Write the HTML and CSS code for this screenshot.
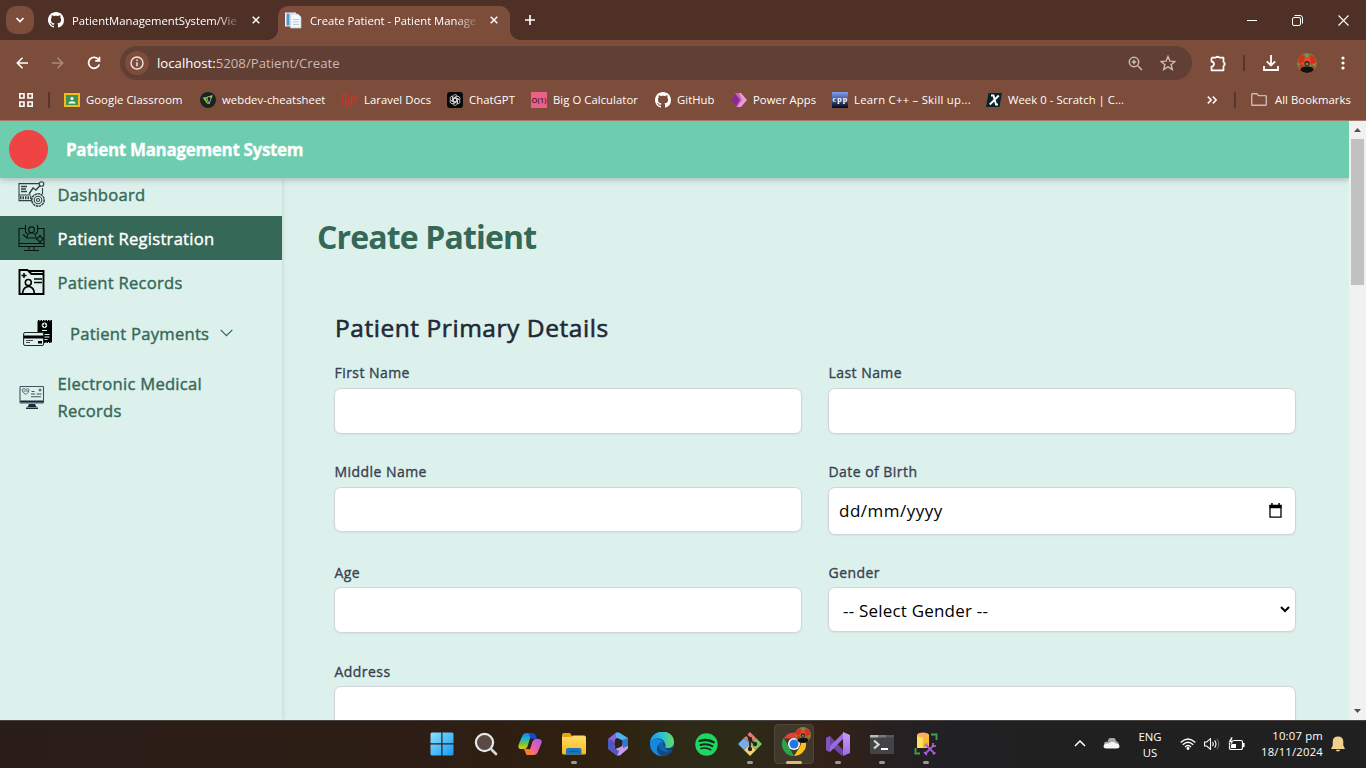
FILE: index.html
```html
<!DOCTYPE html>
<html lang="en">
<head>
<meta charset="utf-8">
<title>Create Patient - Patient Management System</title>
<link rel="stylesheet" href="styles.css">
</head>
<body>
<svg width="0" height="0" class="defs">
  <defs>
    <linearGradient id="win" x1="0" y1="0" x2="1" y2="1"><stop offset="0" stop-color="#8ce3fc"/><stop offset="1" stop-color="#139af5"/></linearGradient>
    <linearGradient id="copA" x1="0" y1="0" x2="0" y2="1"><stop offset="0" stop-color="#1b7fe8"/><stop offset=".35" stop-color="#19b3d8"/><stop offset=".65" stop-color="#6fc23f"/><stop offset="1" stop-color="#f4c417"/></linearGradient>
    <linearGradient id="copB" x1="1" y1="0" x2="0" y2="1"><stop offset="0" stop-color="#9a5cf5"/><stop offset=".5" stop-color="#ef5da8"/><stop offset="1" stop-color="#ff8a3c"/></linearGradient>
    <linearGradient id="fold" x1="0" y1="0" x2="0" y2="1"><stop offset="0" stop-color="#ffdc6b"/><stop offset="1" stop-color="#fbb917"/></linearGradient>
    <linearGradient id="edge" x1="0" y1="0" x2="1" y2="0"><stop offset="0" stop-color="#1a9be0"/><stop offset=".5" stop-color="#2fc0d4"/><stop offset="1" stop-color="#66dd5a"/></linearGradient>
    <linearGradient id="vs" x1="0" y1="0" x2="0" y2="1"><stop offset="0" stop-color="#c79bf3"/><stop offset="1" stop-color="#a06be6"/></linearGradient>
    <linearGradient id="cpp" x1="0" y1="0" x2="0" y2="1"><stop offset="0" stop-color="#7ca0f5"/><stop offset=".5" stop-color="#3d5590"/><stop offset="1" stop-color="#05070d"/></linearGradient>
    <symbol id="github" viewBox="0 0 16 16"><path fill="#fff" d="M8 0C3.58 0 0 3.58 0 8c0 3.54 2.29 6.53 5.47 7.59.4.07.55-.17.55-.38 0-.19-.01-.82-.01-1.49-2.01.37-2.53-.49-2.69-.94-.09-.23-.48-.94-.82-1.13-.28-.15-.68-.52-.01-.53.63-.01 1.08.58 1.23.82.72 1.21 1.87.87 2.33.66.07-.52.28-.87.51-1.07-1.78-.2-3.64-.89-3.64-3.95 0-.87.31-1.59.82-2.15-.08-.2-.36-1.02.08-2.12 0 0 .67-.21 2.2.82.64-.18 1.32-.27 2-.27s1.36.09 2 .27c1.53-1.04 2.2-.82 2.2-.82.44 1.1.16 1.92.08 2.12.51.56.82 1.27.82 2.15 0 3.07-1.87 3.75-3.65 3.95.29.25.54.73.54 1.48 0 1.07-.01 1.93-.01 2.2 0 .21.15.46.55.38A8.01 8.01 0 0 0 16 8c0-4.42-3.58-8-8-8z"/></symbol>
    <clipPath id="round"><circle cx="10" cy="10" r="10"/></clipPath>
    <symbol id="avatar" viewBox="0 0 20 20"><g clip-path="url(#round)"><path fill="#7f7a3e" d="M0 0h20v20H0z"/><path fill="#d9301c" d="M1 6l4-5 3 3-1 5-5 2zM13 2l5 2 1 6-4 2-3-4zM2 12l4-1 1 4-4 1zM14 13h4l-1 4z"/><path fill="#6f9a48" d="M8 0l3 1 1 3-3 1zM15 11l4-1-1 4zM0 10l3 1-2 2z"/><path fill="#e8472e" d="M8 4l4 0 2 4-3 2-4-1z"/><circle cx="10" cy="10.500" r="2.600" fill="#3d241c"/><circle cx="10" cy="11" r="1.300" fill="#b07a5c"/><path fill="#120f10" d="M3 20c0-6 3-6.500 7-6.500s7 .5 7 6.500z"/></g></symbol>
  </defs>
</svg>

<header class="browser">
  <div class="tabs">
    <div class="tab-search"><svg width="10" height="6" viewBox="0 0 10 6"><path d="M1.500 1l3.500 3.500L8.500 1" fill="none" stroke="#fff" stroke-width="1.700"/></svg></div>
    <div class="tab">
      <svg width="16" height="16"><use href="#github"/></svg>
      <span class="tab-title dim-end">PatientManagementSystem/Vie</span>
      <svg width="8" height="8" viewBox="0 0 8 8"><path d="M.7.7l6.600 6.600M7.300.7L.7 7.300" stroke="#fff" stroke-width="1.500"/></svg>
    </div>
    <div class="tab active">
      <svg width="17" height="17" viewBox="0 0 17 17"><path fill="#eef5fa" d="M0 .5h11v14H0z"/><path fill="#469bd0" d="M1.500 1.500h3v12h-3z"/><path fill="#f4f7f9" stroke="#b9c8d4" stroke-width=".7" d="M5.500 2h7.500l3 3v11H5.500z"/><path stroke="#bccbd6" d="M8 7.500h6M8 10h6M8 12.500h6"/></svg>
      <span class="tab-title dim-end">Create Patient - Patient Manage</span>
      <svg width="8" height="8" viewBox="0 0 8 8"><path d="M.7.7l6.600 6.600M7.300.7L.7 7.300" stroke="#fff" stroke-width="1.500"/></svg>
    </div>
    <svg class="new-tab" width="10" height="10" viewBox="0 0 10 10"><path d="M5 0v10M0 5h10" stroke="#fff" stroke-width="1.600"/></svg>
    <div class="window-buttons">
      <svg width="10" height="10" viewBox="0 0 10 10"><path d="M0 5.500h10" stroke="#fff"/></svg>
      <svg width="11" height="11" viewBox="0 0 11 11"><g fill="none" stroke="#fff"><rect x=".5" y="2.500" width="8" height="8" rx="1.500"/><path d="M2.500.5H8A2.500 2.500 0 0 1 10.500 3v5.500"/></g></svg>
      <svg width="11" height="11" viewBox="0 0 11 11"><path d="M.5.5l10 10M10.500.5l-10 10" stroke="#fff" stroke-width="1.100"/></svg>
    </div>
  </div>

  <div class="toolbar">
    <svg width="12" height="12" viewBox="0 0 12 12"><path d="M12 6H1.500M6.500.8L1.300 6l5.200 5.200" fill="none" stroke="#fff" stroke-width="1.600"/></svg>
    <svg width="12" height="12" viewBox="0 0 12 12"><path d="M0 6h10.500M5.500.8L10.700 6l-5.200 5.200" fill="none" stroke="#ab8a7f" stroke-width="1.500"/></svg>
    <svg width="14" height="14" viewBox="0 0 14 14"><path d="M12.300 8.500A5.500 5.500 0 1 1 11.500 3.500L12 4.200" fill="none" stroke="#fff" stroke-width="1.700"/><path d="M13.300.7v5H8.300l0-1.600h3.400V.7z" fill="#fff"/></svg>
    <div class="omnibox">
      <div class="site-info"><svg width="14" height="14" viewBox="0 0 14 14"><circle cx="7" cy="7" r="6" fill="none" stroke="#efe7e4" stroke-width="1.400"/><path d="M7 6.200v4M7 3.500v1.500" stroke="#efe7e4" stroke-width="1.500"/></svg></div>
      <span class="url"><b>localhost:</b>5208/Patient/Create</span>
      <svg width="15" height="15" viewBox="0 0 15 15"><g fill="none" stroke="#c9bbb5" stroke-width="1.500"><circle cx="6" cy="6" r="4.700"/><path d="M9.500 9.500l4.500 4.500"/></g><path d="M6 3.800v4.400M3.800 6h4.400" stroke="#c9bbb5" stroke-width="1.500"/></svg>
      <svg width="16" height="16" viewBox="0 0 16 16"><path d="M8 1.500l1.900 4.600 5 .4-3.800 3.200 1.200 4.800L8 11.900l-4.300 2.600 1.200-4.800L1.100 6.500l5-.4z" fill="none" stroke="#c9bbb5" stroke-width="1.400"/></svg>
    </div>
    <svg width="17" height="17" viewBox="0 0 17 17"><path d="M1.500 2.700h4.500M9 2.700h4.500v4.800M13.500 10.500v4.800h-12v-3.700a2.500 2.500 0 0 0 0-5V2.700" fill="none" stroke="#fff" stroke-width="1.700" stroke-linejoin="round"/><path d="M5.300 3a2.200 2.200 0 0 1 4.400 0zM13.500 6.800a2.200 2.200 0 0 1 0 4.400z" fill="#fff"/></svg>
    <i class="sep"></i>
    <svg width="16" height="16" viewBox="0 0 16 16"><path d="M8 0v10M3.800 6.300L8 10.500l4.200-4.200M1 11v4h14v-4" fill="none" stroke="#fff" stroke-width="1.800"/></svg>
    <svg width="20" height="20"><use href="#avatar"/></svg>
    <svg width="4" height="14" viewBox="0 0 4 14" fill="#fff"><circle cx="2" cy="2" r="1.600"/><circle cx="2" cy="7" r="1.600"/><circle cx="2" cy="12" r="1.600"/></svg>
  </div>

  <nav class="bookmarks">
    <svg width="16" height="16" viewBox="0 0 16 16"><g fill="none" stroke="#fff" stroke-width="1.600"><path d="M1.800 1.800h4.200v4.200H1.800zM10 1.800h4.200v4.200H10zM1.800 10h4.200v4.200H1.800zM10 10h4.200v4.200H10z"/></g></svg>
    <i class="sep"></i>
    <span><svg width="16" height="16" viewBox="0 0 16 16"><path fill="#f5bb16" d="M0 1h16v14H0z"/><path fill="#3b9457" d="M2 3h12v10H2z"/><circle cx="8" cy="6.500" r="1.600" fill="#fff"/><path fill="#fff" d="M4.500 11.500c0-3 7-3 7 0z"/></svg>Google Classroom</span>
    <span><svg width="16" height="16" viewBox="0 0 16 16"><circle cx="8" cy="8" r="8" fill="#1b2321"/><path d="M7 5l5-1-3 8-1.500-4z" fill="none" stroke="#9aa89a" stroke-width="1"/><path fill="#8cc63f" d="M2.500 5.500l5-.5L6 7l2.500 5.500-2-1.500zM8.500 4.500l4-1.500-1 3.500z"/></svg>webdev-cheatsheet</span>
    <span><svg width="16" height="16" viewBox="0 0 16 16"><path d="M.6 2.500l3-1.700 3 1.700v7l3 1.700 5.600-3.200V4.800L12.500 3.300 9.700 4.800v6.400M.6 2.500v9.800l5.800 3.200 3.200-1.800v-2.500M.6 2.500l3 1.700 3-1.700M3.600 4.200v6.900l2.800 1.800 3.200-1.700M3.600 11.100l3-1.600M9.700 4.800l2.800 1.700 2.700-1.700M12.500 6.500v3" fill="none" stroke="#cf3528" stroke-width=".9"/></svg>Laravel Docs</span>
    <span><svg width="16" height="16" viewBox="0 0 16 16"><rect width="16" height="16" rx="3" fill="#08090a"/><g fill="none" stroke="#d8d8d8" stroke-width=".8"><path id="petal" d="M5.800 9.300V5a2.300 2.300 0 0 1 4.300-1.200L6.500 6v3.500"/><use href="#petal" transform="rotate(60 8 8)"/><use href="#petal" transform="rotate(120 8 8)"/><use href="#petal" transform="rotate(180 8 8)"/><use href="#petal" transform="rotate(240 8 8)"/><use href="#petal" transform="rotate(300 8 8)"/></g></svg>ChatGPT</span>
    <span><svg width="16" height="16" viewBox="0 0 16 16"><path fill="#ec5f87" d="M0 0h16v16H0z"/><text x="8" y="11" text-anchor="middle" class="big-o" textLength="15">O(1)</text></svg>Big O Calculator</span>
    <span><svg width="16" height="16"><use href="#github"/></svg>GitHub</span>
    <span><svg width="16" height="16" viewBox="0 0 16 16"><path fill="#8d2a92" d="M0 8l6-7 5 7-5 7z"/><path fill="#c662bd" d="M4 1h4l4 7-5 7H5l4-7z"/><path fill="#ec9bd9" d="M8 1h2l6 7-6 7H6l5-7z"/></svg>Power Apps</span>
    <span class="learn"><svg width="16" height="16" viewBox="0 0 16 16"><path fill="url(#cpp)" d="M0 0h16v16H0z"/><text x="8" y="10" text-anchor="middle" class="cpp" textLength="15">cpp</text></svg>Learn C++ – Skill up...</span>
    <span><svg width="16" height="16" viewBox="0 0 16 16"><path fill="#04252b" d="M2.500 1H16l-2.500 14H0z"/><path d="M5 3.500h2.500l2.500 9h2M12.800 3.500L3.800 12.500" fill="none" stroke="#fff" stroke-width="1.900"/></svg>Week 0 - Scratch | C...</span>
    <svg width="10" height="8" viewBox="0 0 10 8"><path d="M.8.6L4.200 4 .8 7.400M5.800.6L9.200 4 5.800 7.400" fill="none" stroke="#fff" stroke-width="1.500"/></svg>
    <i class="sep"></i>
    <span class="all"><svg width="16" height="13" viewBox="0 0 16 13"><path d="M1.500.8h4.300l1.700 1.800h7q.8 0 .8.800v8q0 .8-.8.800h-13q-.8 0-.8-.8V1.600q0-.8.800-.8z" fill="none" stroke="#cbbab3" stroke-width="1.400"/></svg>All Bookmarks</span>
  </nav>
</header>

<div class="viewport">
  <div class="app">
    <div class="app-header"><div class="logo"></div><div class="brand">Patient Management System</div></div>
    <div class="body">
      <aside>
        <a class="item first"><svg width="27" height="26" viewBox="0 0 27 26"><g fill="none" stroke="#35413e" stroke-width="1.100"><path d="M21 2.600H1v17h13M1 14h12M24.500 7v6"/><path d="M11 13l4-6 3 2 4-4.500" stroke-width="1.400"/><circle cx="23.500" cy="3" r="2.300"/><path d="M3 5.500h6M3 8h5M3 10.500h6" stroke-width="1.400"/><path d="M2 16.800h12" stroke-width="3" stroke-dasharray="1.500 1"/><circle cx="20" cy="19" r="6.200" stroke-width="1.500" stroke-dasharray="2.500 .6"/><circle cx="20" cy="19" r="3.800"/><circle cx="20" cy="19" r="1.500"/></g></svg><span>Dashboard</span></a>
        <a class="item selected"><svg width="27" height="27" viewBox="0 0 27 27"><g fill="none" stroke="#061511" stroke-width="1.100"><path d="M7 3.500H1v18h25v-18h-6M1 18.500h25M11 21.500v3M16 21.500v3M6 25.500h15"/><circle cx="13.500" cy="4.800" r="2.900"/><path d="M9 13c0-7 9-7 9 0zM7.500 0v7l2 2M19.500 0v7l-2 2M5 9.500l4 3.500h9"/><path d="M22 10.500l1.500 2 2 1.500-2 1.500-1.500 2-1.500-2-2-1.500 2-1.500z"/></g></svg><span>Patient Registration</span></a>
        <a class="item"><svg width="26" height="26" viewBox="0 0 26 26"><g fill="none" stroke="#000" stroke-width="1.900"><path d="M1 1h8l4 4h12v20H1zM10 2h15v20"/><circle cx="9.800" cy="13.500" r="3" stroke-width="1.600"/><path d="M4 25c0-10 12-10 12 0M15.500 10h8M15.500 13.500h8" stroke-width="1.700"/><path d="M5.500 4v5M3 6.500h5" stroke-width="1.500"/></g></svg><span>Patient Records</span></a>
        <a class="item payments"><svg width="29" height="26" viewBox="0 0 29 26"><path fill="#000" d="M14.500 0H29v23h-9v-8h-5.500z"/><path d="M14 .6h15M20 22.500h9" stroke="#ddf1ec" stroke-dasharray="1 1.500"/><circle cx="21.500" cy="5.300" r="2.700" fill="#ddf1ec"/><path d="M21.500 3.500v3.600M19.700 5.300h3.600" stroke="#000"/><path d="M19 10.500h5M21.500 14.500h5M21.500 17h5M21.500 19.500h3" stroke="#ddf1ec"/><rect x=".6" y="12.500" width="20" height="13" rx="1.500" fill="#ddf1ec" stroke="#222"/><path fill="#000" d="M.6 15.500h20v3H.6zM15 21h4v2.500h-4z"/><path d="M3 20.500h7M3 22.500h4" stroke="#222" stroke-width=".8"/></svg><span>Patient Payments</span><svg class="chev" width="13" height="8" viewBox="0 0 13 8"><path d="M.7.9l5.800 5.800L12.300.9" fill="none" stroke="#356856" stroke-width="1.300"/></svg></a>
        <a class="item records"><svg width="26" height="24" viewBox="0 0 26 24"><g fill="none" stroke="#40535c" stroke-width="1.100"><rect x="1.500" y="1.500" width="23.500" height="16.500" rx=".8"/><path d="M12.500 11.800h10M12.500 9h4M18 9h5M13 6.500h3M21.500 3.500v3M20 5h3"/><path d="M3.500 4.500q2-2 4 0 2-2 3 0 0 3-3 5-4-2-4-5zM5 6h5" stroke-width=".8"/></g><path fill="#172a39" d="M2 15.500h22.500v2H2zM10.500 19h6l1.500 3h-9zM7.500 22.500h12V24h-12z"/></svg><span>Electronic Medical Records</span></a>
      </aside>
      <main>
        <h1>Create Patient</h1>
        <h2>Patient Primary Details</h2>
        <form>
          <div><label>First Name</label><div class="control"></div></div>
          <div><label>Last Name</label><div class="control"></div></div>
          <div><label>Middle Name</label><div class="control short"></div></div>
          <div><label>Date of Birth</label><div class="control date"><span>dd/mm/yyyy</span><svg width="13" height="15" viewBox="0 0 13 15"><path d="M1 2.500h11v11.700H1z" fill="none" stroke="#000" stroke-width="1.300"/><path d="M.5 2h12v3.200H.5zM2.200 0h1.500v2.500H2.200zM9.300 0h1.500v2.500H9.300z"/></svg></div></div>
          <div class="low"><label>Age</label><div class="control"></div></div>
          <div class="low"><label>Gender</label><div class="control short gender"><span>-- Select Gender --</span><svg width="10" height="7" viewBox="0 0 10 7"><path d="M1 1l4 4 4-4" fill="none" stroke="#000" stroke-width="2"/></svg></div></div>
          <div class="low wide"><label>Address</label><div class="control"></div></div>
        </form>
      </main>
    </div>
  </div>
  <div class="scrollbar">
    <svg width="7" height="4" viewBox="0 0 7 4"><path d="M3.500 0L7 4H0z" fill="#505050"/></svg>
    <div class="thumb"></div>
    <svg width="7" height="4" viewBox="0 0 7 4"><path d="M3.500 4L7 0H0z" fill="#505050"/></svg>
  </div>
</div>

<footer class="taskbar">
  <div class="apps">
    <div><svg width="24" height="24" viewBox="0 0 24 24"><path fill="url(#win)" d="M.5 2q0-1.500 1.500-1.500h9.300v10.800H.5zM12.500.5H22q1.500 0 1.500 1.500v9.300h-11zM.5 12.500h10.800v11H2q-1.500 0-1.500-1.500zM12.500 12.500h11V22q0 1.500-1.500 1.500h-9.500z"/></svg></div>
    <div><svg width="24" height="24" viewBox="0 0 24 24"><circle cx="10.500" cy="10.500" r="8.600" fill="#5b4a43" stroke="#e9e9e9" stroke-width="2.200"/><path d="M17 17l5 5" stroke="#d5d7da" stroke-width="2.700" stroke-linecap="round"/></svg></div>
    <div><svg width="24" height="24" viewBox="0 0 24 24"><path fill="url(#copA)" d="M4 4.500Q5.200 1 8.500 1H16l-3 4q-1 1-1.500 3l-2 6.500Q8.700 17 6 17H3.500Q-.5 17 .5 13z"/><path fill="#1748c8" d="M10.500 1h4.500q2 0 2.800 2.500l1.200 3.500h-4.500q-2 0-2.500-2z"/><path fill="url(#copB)" d="M20 19.500Q18.800 23 15.500 23H8l3-4q1-1 1.500-3l2-6.500Q15.300 7 18 7h2.500q4 0 3 4z"/><path fill="#f97937" d="M14 22.500q-1 .7-3 .5-3 0-4-3.500l-1-2.500h4.500q2 0 2.500 2z"/></svg></div>
    <div class="run"><svg width="24" height="22" viewBox="0 0 24 22"><path fill="#e5a40b" d="M0 2q0-2 2-2h6l2 3v4H0z"/><path fill="url(#fold)" d="M0 4h9l2-1.500h11q2 0 2 2V20q0 1.500-2 1.500H2Q0 21.500 0 20z"/><path fill="#1478c9" d="M4 21.500V17q0-2 2-2h11.500q2 0 2 2v4.500z"/><path d="M7 18.500h9.500" stroke="#0b59a2" stroke-width="1.300"/></svg></div>
    <div><svg width="22" height="24" viewBox="0 0 22 24"><path fill="#8e63d9" d="M1 7l8-6.500 4 3-5 4v9l-4 2.500-3-2z"/><path fill="#48b5f2" d="M9 .5h3L21 6v9l-5-2.500v-4L9 5.500z"/><path fill="#c49aef" d="M21 12v4.500l-8 7h-3l-6-4.500 11-5 1-3z"/><path fill="#4d59bd" d="M1 7v9.500L10 23.500l2-4.500-5-3V9z"/><path fill="#2f78cc" d="M15 8l6-2v8l-5 2z"/><circle cx="11" cy="12" r="3.600" fill="#2c241c"/></svg></div>
    <div><svg width="24" height="24" viewBox="0 0 24 24"><circle cx="12" cy="12" r="12" fill="#0b66bd"/><path fill="url(#edge)" d="M0 11C1-4 24-4 24 10c0 5-4 6-7 6-4 0-3-2-2-4 0-7-12-8-15-1z"/><path fill="#1689d9" d="M0 11c3-5 10-5 13-1-6-1-7 8-2 14C5 23 0 19 0 11z"/><path fill="#134a86" d="M9 13c0 5 5 9 13 5-3 5-8 7-12 5-4-3-4-8-1-10z"/><path fill="#2b2c1d" d="M13 10.500q4 2 2 4.500 3 3 8 0l1 2-2 1q-8 2-9-7.500z" opacity=".75"/></svg></div>
    <div><svg width="23" height="23" viewBox="0 0 23 23"><circle cx="11.500" cy="11.500" r="11.200" fill="#1ed760"/><g fill="none" stroke="#17291b" stroke-linecap="round"><path d="M4.500 8q7.500-2.500 14.200 1.200" stroke-width="2.300"/><path d="M5.500 12q6.500-1.800 11.800 1.200" stroke-width="1.900"/><path d="M6 15.500q5-1.300 9.800 1.200" stroke-width="1.600"/></g></svg></div>
    <div class="run"><svg width="24" height="24" viewBox="0 0 24 24"><path fill="#f17373" d="M12 0l6 6-6 6-6-6z"/><path fill="#74aee9" d="M6 6l6 6-6 6-6-6z"/><path fill="#83c163" d="M18 6l6 6-6 6-6-6z"/><path fill="#f7d276" d="M12 12l6 6-6 6-6-6z"/><path d="M8 2.500l4 4v10M12 7.500l4.500 4.500" fill="none" stroke="#28251c" stroke-width="1.800"/><g fill="#28251c"><circle cx="12" cy="7" r="2.200"/><circle cx="12" cy="17" r="2.200"/><circle cx="17" cy="12" r="2.200"/></g></svg></div>
    <div class="run current"><svg width="30" height="30" viewBox="0 0 30 30"><path fill="#e34133" d="M3.600 11.500a12 12 0 0 1 20.800 0z"/><path fill="#2ba24c" d="M3.600 10.800L9 20l5 9A12 12 0 0 1 3.600 10.800z"/><path fill="#fbc116" d="M14 29l6-9.500q2-4 0-8h4.800A12 12 0 0 1 14 29z"/><circle cx="14" cy="17" r="6" fill="#fff"/><circle cx="14" cy="17" r="4.500" fill="#2377e8"/></svg><svg class="badge" width="16" height="16"><use href="#avatar"/></svg></div>
    <div class="run"><svg width="24" height="24" viewBox="0 0 24 24"><path fill="#6f46a8" d="M0 6l4-2 14 15-2 5L4 13v0l-1.500 1L5 16l-2 3-3-1z"/><path fill="#9b6ade" d="M0 18l18-18v6L4 20z"/><path fill="#8055bd" d="M0 6l4-2v15l-4-1z"/><path fill="url(#vs)" d="M17 0l7 3v18l-7 3z"/></svg></div>
    <div class="run"><svg width="24" height="20" viewBox="0 0 24 20"><rect width="24" height="19" y="1" rx="1" fill="#424446"/><path fill="#b7b9ba" d="M0 1h8v2.500H0z"/><path fill="#777a7c" d="M8 1h8v2.500H8z"/><path fill="#56595b" d="M16 1h8v2.500h-8z"/><path d="M4 6.500l4.500 4L4 14.500" fill="none" stroke="#d4d5d6" stroke-width="2.300"/><path d="M11 15h7" stroke="#fff" stroke-width="2"/></svg></div>
    <div class="run"><svg width="24" height="24" viewBox="0 0 24 24"><path fill="#f5bd2c" d="M3 3h12v13H3z"/><path fill="#ffe05a" d="M3 3h6v13H3z"/><ellipse cx="9" cy="3" rx="6" ry="2.500" fill="#ffae5e"/><path d="M17 2.500h5.500V8M6 21.500H1.500V16" fill="none" stroke="#3da44a" stroke-width="1.800"/><path d="M12 13l8.500 8.500M20 13l-8.500 8.500" stroke="#a557cf" stroke-width="1.800"/><path d="M10 14l3.500-2.500M19 11v3h3M10 20l3 3M19 22.500l2.500-2" fill="none" stroke="#b76add" stroke-width="1.500"/></svg></div>
  </div>
  <div class="tray">
    <svg width="12" height="7" viewBox="0 0 12 7"><path d="M1 6l5-5 5 5" fill="none" stroke="#fff" stroke-width="1.500"/></svg>
    <svg width="17" height="11" viewBox="0 0 17 11"><path fill="#a5a7a9" d="M3 9A3 3 0 0 1 2 4q2-1 3 0a4 4 0 0 1 8-1q3 1 3 4z"/><path fill="#f4f5f6" d="M3.500 10.500Q.5 10.500.5 8q.3-2 3-2.500 2 .5 4.500-1.500 3-1 5 1.500 3.500.3 3.500 2.800 0 2.200-3 2.200z"/></svg>
    <div class="lang">ENG<br>US</div>
    <svg width="16" height="12" viewBox="0 0 16 12"><g fill="none" stroke="#fff" stroke-width="1.300"><path d="M.7 4.500q7.300-7 14.600 0M2.800 6.800q5.200-5 10.400 0M5 9q3-3 6 0"/></g><circle cx="8" cy="10.500" r="1.400" fill="#fff"/></svg>
    <svg width="16" height="12" viewBox="0 0 16 12"><path d="M.6 4h2.200L6.500.7v10.600L2.800 8H.6zM8.500 4q1.500 2 0 4M10.600 2.300q2.800 3.700 0 7.400" fill="none" stroke="#fff" stroke-width="1.100"/><path d="M12.800.8q4 5.200 0 10.400" fill="none" stroke="#777"/></svg>
    <svg width="17" height="13" viewBox="0 0 17 13"><rect x="1.500" y="3.500" width="13" height="9" rx="1.500" fill="none" stroke="#fff" stroke-width="1.200"/><path fill="#fff" d="M3 7h5v4H3zM15 6h1.600v4H15z"/><path fill="#fff" stroke="#202020" stroke-width=".6" d="M3 0L.3 5.500h2.500L2 9l4-5H3.700L5 0z"/></svg>
    <div class="clock">10:07 pm<br>18/11/2024</div>
    <svg width="14" height="16" viewBox="0 0 14 16"><path fill="#efd08d" d="M7 .5q5 0 5.300 5v4L14 13H0l1.700-3.500v-4Q2 .5 7 .5zM4.800 13.700h4.400Q9 15.500 7 15.500t-2.200-1.800z"/></svg>
  </div>
</footer>
</body>
</html>
```
FILE: styles.css
```css
* { box-sizing: border-box; }
body {
  margin: 0;
  width: 1366px;
  height: 768px;
  overflow: hidden;
  display: flex;
  flex-direction: column;
  font-family: "Open Sans", "Noto Sans", sans-serif;
}
svg { display: block; flex: none; }
.defs { position: absolute; }

/* Browser chrome */
.browser { height: 121px; background: #7d4d3b; color: #fff; border-bottom: 1px solid #a4786a; font-size: 11.3px; flex: none; }
.tabs { height: 40px; background: #4f3027; display: flex; align-items: center; padding-left: 6px; }
.tab-search { width: 28px; height: 28px; border-radius: 10px; background: #7d4d3b; display: grid; place-items: center; margin-right: 14px; }
.tab { width: 230px; display: flex; align-items: center; }
.tab-title { width: 168px; margin: 0 12px 0 8px; white-space: nowrap; letter-spacing: -.02px; }
.dim-end { mask-image: linear-gradient(90deg, #000 145px, transparent 170px); }
.tab.active { width: 232px; height: 34px; align-self: flex-end; background: #7d4d3b; border-radius: 10px 10px 0 0; padding: 0 0 6px 7px; position: relative; }
.tab.active::before, .tab.active::after { content: ""; position: absolute; bottom: 0; width: 10px; height: 10px; }
.tab.active::before { left: -10px; background: radial-gradient(circle at 0 0, transparent 9.5px, #7d4d3b 10px); }
.tab.active::after { right: -10px; background: radial-gradient(circle at 100% 0, transparent 9.5px, #7d4d3b 10px); }
.new-tab { margin-left: 15px; }
.window-buttons { margin-left: auto; display: flex; gap: 35px; padding-right: 17px; }
.toolbar { height: 46px; display: flex; align-items: center; padding-left: 16px; }
.toolbar > svg:nth-child(2) { margin-left: 24px; }
.toolbar > svg:nth-child(3) { margin: 0 20px 0 23px; }
.omnibox { width: 1072px; height: 34px; margin-left: -1px; border-radius: 17px; background: #613f34; display: flex; align-items: center; padding: 0 16px 0 5px; margin-right: 18px; }
.site-info { width: 24px; height: 24px; border-radius: 50%; background: #7d4d3b; display: grid; place-items: center; margin-right: 8px; }
.url { flex: 1; font-size: 13.2px; color: #cbb9b1; }
.url b { font-weight: 400; color: #fff; }
.omnibox svg + svg { margin-left: 17px; }
.sep { width: 2px; height: 16px; background: #56362c; border-radius: 1px; }
.toolbar > .sep { margin: 0 18px 0 16px; }
.toolbar > svg:nth-last-child(2) { margin: 0 34px 0 18px; }
.toolbar > svg:last-child { margin-left: -10px; }
.bookmarks { height: 28px; display: grid; align-items: center; grid-template-columns: 30px 16px 136px 142px 105px 84px 124px 76px 101px 154px 221px 27px 17px 114px; padding-left: 18px; letter-spacing: .05px; line-height: 15px; }
.bookmarks span { display: flex; align-items: center; gap: 6px; white-space: nowrap; }
.bookmarks .all { gap: 8px; }
.bookmarks .learn { letter-spacing: .26px; }
.bookmarks { padding-bottom: 1px; }
.big-o { font: 600 7.5px "Open Sans", sans-serif; fill: #461a30; }
.cpp { font: 700 8px "Liberation Serif", serif; fill: #fff; }

/* Page */
.viewport { height: 599px; display: flex; background: #ddf1ec; overflow: hidden; flex: none; }
.app { width: 1349px; height: 599px; overflow: hidden; }
.app-header { height: 57px; background: #6ecdae; display: flex; align-items: center; padding-left: 9px; position: relative; box-shadow: 0 2px 6px rgba(0, 0, 0, .22); }
.logo { width: 39px; height: 39px; border-radius: 50%; background: #ef4444; margin-right: 18px; }
.brand { color: #fff; font-size: 17px; font-weight: 700; letter-spacing: -.32px; -webkit-text-stroke: .3px #fff; }
.body { display: flex; height: 542px; }
aside { width: 282px; box-shadow: 1px 0 4px rgba(0, 0, 0, .1); color: #356856; font-size: 16.6px; letter-spacing: .25px; -webkit-text-stroke: .4px currentColor; }
.item { display: flex; align-items: center; height: 44px; padding-left: 18px; }
.item > svg:first-child { width: 27px; margin-right: 12.500px; }
.item > svg { -webkit-text-stroke: 0; }
.item.first { height: 38px; padding-bottom: 6px; }
.selected { background: #356856; color: #fff; }
.item.payments { height: 58px; padding-left: 23px; }
.item.payments > svg:first-child { width: 29px; margin-right: 18px; }
.chev { margin-left: 11px; }
.item.records { height: 70px; line-height: 27px; padding-bottom: 1px; }
.records span { width: 170px; }
main { flex: 1; padding: 34px 53px 0 35px; }
h1 { margin: 0; height: 50px; line-height: 50px; font-size: 32px; font-weight: 700; color: #356856; letter-spacing: -.85px; }
h2 { margin: 48px 0 0 18px; height: 36px; line-height: 36px; font-size: 24.5px; font-weight: 400; color: #1f2937; letter-spacing: .55px; -webkit-text-stroke: .6px #1f2937; }
form { margin: 15px 0 0 17px; display: grid; grid-template-columns: 468px 468px; grid-template-rows: 73px 74px 73px 73px; gap: 26px; }
label { display: block; height: 23px; line-height: 23px; margin-bottom: 4px; padding-left: .5px; font-size: 14px; color: #374151; letter-spacing: .45px; -webkit-text-stroke: .35px #374151; }
.low label { line-height: 25px; }
.control { height: 46px; background: #fff; border: 1px solid #d1d5db; border-radius: 7px; box-shadow: 0 1px 2px rgba(0, 0, 0, .06); display: flex; align-items: center; justify-content: space-between; font-size: 17px; color: #000; }
.short { height: 45px; }
.date { height: 48px; padding: 0 13px 2px 10px; letter-spacing: .5px; }
.gender { padding: 1px 5px 0 14px; letter-spacing: .2px; }
.gender svg { margin-top: -2px; }
.wide { grid-column: span 2; }
.scrollbar { width: 17px; background: #f1f1f1; display: flex; flex-direction: column; align-items: center; padding: 7px 0; }
.thumb { width: 13px; height: 146px; background: #c1c1c1; margin: 7px 0 auto; }

/* Taskbar */
.taskbar { height: 48px; border-top: 1px solid #484340; display: flex; justify-content: space-between; padding-left: 420px; background: linear-gradient(90deg, #2a1d18 0, #2d1d15 400px, #30200f 600px, #2e2a17 680px, #2c2a18 750px, #332117 830px, #272020 890px, #202126 960px, #202020 1040px); color: #fff; }
.apps { display: flex; padding-bottom: 1px; }
.apps > div { width: 44px; display: grid; place-items: center; position: relative; }
.run::after { content: ""; position: absolute; left: 19px; bottom: 3px; width: 6px; height: 3px; border-radius: 2px; background: #9d9895; }
.apps > .current { width: 40px; height: 40px; margin: 3px 2px 0; background: #41382c; border: 1px solid #504638; border-radius: 4px; }
.current > svg:first-child { transform: translate(1px, -2px); }
.current::after { width: 16px; left: 11px; bottom: -1px; background: #dfba73; }
.badge { position: absolute; right: 2px; top: 2px; }
.tray { width: 292px; display: flex; align-items: center; font-size: 11.300px; line-height: 16px; padding-bottom: 2px; }
.tray > svg:nth-child(2) { margin-left: 17px; }
.lang { width: 44px; text-align: center; margin: 2px 8px 0; }
.tray > svg:nth-child(5), .tray > svg:nth-child(6) { margin-left: 8px; }
.clock { width: 78px; text-align: right; white-space: nowrap; letter-spacing: .2px; }
.tray > svg:last-child { margin-left: 8px; }
```
